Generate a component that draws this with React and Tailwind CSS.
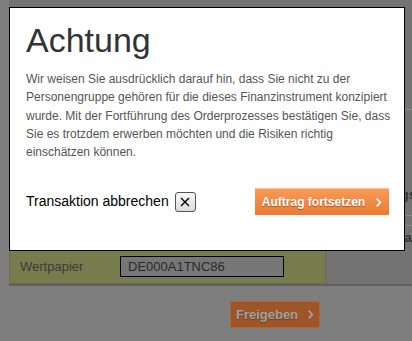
import React from 'react';

const Chevron = ({ className }) => (
    <svg viewBox="0 0 8 12" className={className} fill="none" stroke="currentColor" strokeWidth="2">
        <path d="M2 1.5 L6 6 L2 10.5" />
    </svg>
);

const App = () => {
    return (
        <div className="relative w-[412px] h-[341px] overflow-hidden bg-[#7e7e7e] font-['Liberation_Sans',Arial,sans-serif]">
            {/* page behind the overlay */}
            <div className="ml-[9px] h-[286px] bg-[#737373] border-b-2 border-[#5f5f5f] flex flex-col">
                <div className="h-[110px] border-b border-[#8a8a8a]" />
                <div className="h-[105px] flex items-end pb-[11px] justify-end text-[#333] text-[13px] font-bold">
                    <span className="-mr-[4px]">gs</span>
                </div>
                <div className="h-[10px] border-t border-[#8a8a8a]" />
                <div className="flex-1 border-t border-[#8a8a8a] flex flex-col">
                    <div className="h-[24px] flex items-center justify-end text-[#333] text-[13px] font-bold">
                        <span className="-mr-[4px]">af</span>
                    </div>
                    <div className="w-[317px] flex-1 bg-[#787b4c] border border-t-0 border-dotted border-[#5a5a5a] flex items-center">
                        <span className="ml-[10px] w-[100px] text-[13px] text-[#3a3a3a]">Wertpapier</span>
                        <div className="w-[164px] h-[21px] border border-black bg-[#777] flex items-center pl-[7px] text-[13px] text-[#2a2a2a]">
                            DE000A1TNC86
                        </div>
                    </div>
                </div>
            </div>
            <div className="flex justify-start pl-[230px] pt-[15px]">
                <div className="w-[90px] h-[27px] bg-[#9e5628] border border-[#ad6636] flex items-center justify-center gap-[9px] text-[#a2a2a2] text-[13px] font-bold [text-shadow:0_1px_1px_rgba(0,0,0,0.3)]">
                    <span>Freigeben</span>
                    <Chevron className="w-[7px] h-[11px]" />
                </div>
            </div>

            {/* modal */}
            <div className="absolute left-[9px] top-[7px] w-[396px] h-[244px] bg-white border border-black pl-[16px] pr-[8px]">
                <h1 className="mt-[12px] text-[34px] leading-[40px] text-[#333]">Achtung</h1>
                <p className="mt-[10px] text-[12px] leading-[18.3px] text-[#555]">
                    Wir weisen Sie ausdrücklich darauf hin, dass Sie nicht zu der Personengruppe gehören für die dieses Finanzinstrument konzipiert wurde. Mit der Fortführung des Orderprozesses bestätigen Sie, dass Sie es trotzdem erwerben möchten und die Risiken richtig einschätzen können.
                </p>
                <div className="mt-[27px] pr-[7px] flex items-center justify-between">
                    <div className="flex items-center gap-[6px] text-[14px] text-black">
                        <span>Transaktion abbrechen</span>
                        <span className="w-[21px] h-[20px] rounded-[3px] border border-[#555] bg-gradient-to-b from-[#f8f8f8] to-[#dcdcdc] flex items-center justify-center">
                            <svg viewBox="0 0 10 10" className="w-[10px] h-[10px]" stroke="black" strokeWidth="1.4">
                                <path d="M1 1 L9 9 M9 1 L1 9" />
                            </svg>
                        </span>
                    </div>
                    <button className="w-[134px] h-[27px] bg-gradient-to-b from-[#f89a56] to-[#ec7a31] border-t border-[#ffc89a] flex items-center justify-center gap-[10px] text-white text-[12px] font-bold [text-shadow:0_1px_1px_rgba(0,0,0,0.35)]">
                        <span>Auftrag fortsetzen</span>
                        <Chevron className="w-[7px] h-[11px]" />
                    </button>
                </div>
            </div>
        </div>
    );
};

export default App;
